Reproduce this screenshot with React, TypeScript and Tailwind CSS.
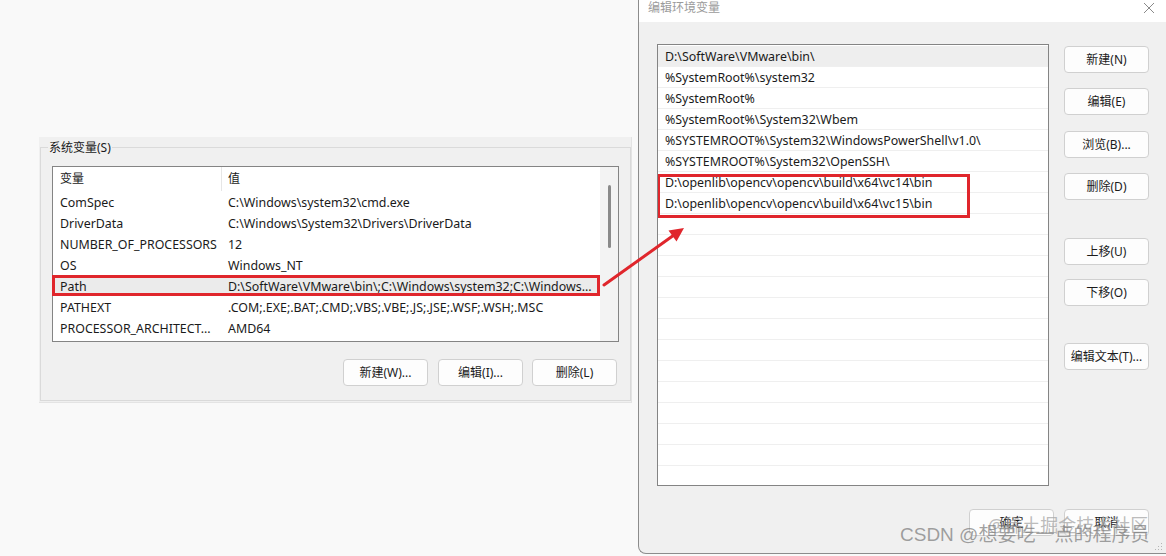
import React from "react";

const leftRows: [string, string][] = [
  ["ComSpec", "C:\\Windows\\system32\\cmd.exe"],
  ["DriverData", "C:\\Windows\\System32\\Drivers\\DriverData"],
  ["NUMBER_OF_PROCESSORS", "12"],
  ["OS", "Windows_NT"],
  ["Path", "D:\\SoftWare\\VMware\\bin\\;C:\\Windows\\system32;C:\\Windows..."],
  ["PATHEXT", ".COM;.EXE;.BAT;.CMD;.VBS;.VBE;.JS;.JSE;.WSF;.WSH;.MSC"],
  ["PROCESSOR_ARCHITECT...", "AMD64"],
];

const rightRows: string[] = [
  "D:\\SoftWare\\VMware\\bin\\",
  "%SystemRoot%\\system32",
  "%SystemRoot%",
  "%SystemRoot%\\System32\\Wbem",
  "%SYSTEMROOT%\\System32\\WindowsPowerShell\\v1.0\\",
  "%SYSTEMROOT%\\System32\\OpenSSH\\",
];

const highlighted: string[] = [
  "D:\\openlib\\opencv\\opencv\\build\\x64\\vc14\\bin",
  "D:\\openlib\\opencv\\opencv\\build\\x64\\vc15\\bin",
];

function Btn({ children, className = "" }: { children: React.ReactNode; className?: string }) {
  return (
    <div
      className={
        "flex h-[27px] w-[85px] shrink-0 items-center justify-center rounded-[4px] border border-[#d0d0d0] bg-[#fdfdfd] text-[12px] leading-[16px] text-[#1b1b1b] " +
        className
      }
    >
      {children}
    </div>
  );
}

function RRow({ text, selected = false }: { text?: string; selected?: boolean }) {
  return (
    <div
      className={
        "flex h-[21px] shrink-0 items-center border-b border-[#efefef] pl-[7px] pt-[1px] text-[12.4px] leading-[17px] whitespace-nowrap " +
        (selected ? "bg-[#eeeeee]" : "")
      }
    >
      {text ?? ""}
    </div>
  );
}

export default function App() {
  const empties = Array.from({ length: 14 });
  return (
    <div className="relative flex h-[556px] w-[1166px] overflow-hidden bg-[#f9f9f9] font-['Noto_Sans','Noto_Sans_CJK_SC',sans-serif] text-[12px] leading-none text-[#1a1a1a]">
      {/* Left: system variables panel */}
      <div className="w-[638px] shrink-0 pl-[39px] pt-[137px]">
        <div className="h-[266px] w-[593px] border-b border-r border-[#e4e4e4] bg-[#f0f0f0] pl-[1px] pt-[10px]">
          <div className="relative h-[254px] w-[591px] border border-[#dadada] px-[11px] pt-[18px]">
            <span className="absolute -top-[7px] left-[7px] bg-[#f0f0f0] px-[1px] leading-[14px]">系统变量(S)</span>

            <div className="flex h-[176px] w-[567px] border border-[#848484] bg-white">
              <div className="min-w-0 flex-1">
                <div className="flex h-[24px] items-center leading-[16px]">
                  <div className="flex h-full w-[169px] items-center border-r border-[#e6e6e6] pl-[7px]">变量</div>
                  <div className="pl-[6px]">值</div>
                </div>
                {leftRows.map(([n, v]) => (
                  <div
                    key={n}
                    className={
                      "relative flex h-[21px] items-center pt-[1px] text-[12.4px] leading-[17px] whitespace-nowrap " +
                      (n === "Path" ? "bg-[#ebebeb]" : "")
                    }
                  >
                    <div className="w-[168px] shrink-0 overflow-hidden pl-[7px]">{n}</div>
                    <div className="min-w-0 flex-1 overflow-hidden pl-[7px]">{v}</div>
                    {n === "Path" && (
                      <div className="absolute -left-[1px] top-0 right-0 bottom-0 border-[3px] border-[#e0262c]" />
                    )}
                  </div>
                ))}
              </div>
              <div className="flex w-[18px] shrink-0 justify-center bg-[#f3f3f3] pt-[18px]">
                <div className="h-[63px] w-[3px] rounded-full bg-[#8a8a8a]" />
              </div>
            </div>

            <div className="mt-[17px] flex w-[567px] justify-end pr-[2px]">
              <Btn>新建(W)...</Btn>
              <Btn className="ml-[10px]">编辑(I)...</Btn>
              <Btn className="ml-[9px]">删除(L)</Btn>
            </div>
          </div>
        </div>
      </div>

      {/* Right: edit environment variable dialog */}
      <div className="relative flex h-[554px] w-[528px] shrink-0 flex-col overflow-hidden rounded-bl-[8px] border-b border-l border-[#8c8c8c] bg-[#f0f0f0]">
        <div className="flex h-[22px] shrink-0 items-start justify-between bg-white pl-[9px] pr-[11px] pt-[1px]">
          <span className="leading-[14px] text-[#9b9b9b]">编辑环境变量</span>
          <svg width="12" height="12" viewBox="0 0 12 12" className="mt-[1px]">
            <path d="M1 1 L11 11 M11 1 L1 11" stroke="#8a8a8a" strokeWidth="1" fill="none" />
          </svg>
        </div>

        <div className="flex flex-1 flex-col pl-[18px] pr-[17px] pt-[22px]">
          <div className="flex">
            <div className="flex h-[442px] w-[392px] shrink-0 flex-col overflow-hidden border border-[#848484] bg-white pt-[1px]">
              <RRow text={rightRows[0]} selected />
              {rightRows.slice(1).map((t) => (
                <RRow key={t} text={t} />
              ))}
              <div className="relative flex shrink-0 flex-col">
                {highlighted.map((t) => (
                  <RRow key={t} text={t} />
                ))}
                <div className="absolute -left-[1px] top-[2px] h-[44px] w-[313px] border-[3px] border-[#e0262c]" />
              </div>
              {empties.map((_, i) => (
                <RRow key={i} />
              ))}
            </div>

            <div className="ml-[15px] flex flex-col">
              <Btn className="mt-[2px]">新建(N)</Btn>
              <Btn className="mt-[15px]">编辑(E)</Btn>
              <Btn className="mt-[16px]">浏览(B)...</Btn>
              <Btn className="mt-[15px]">删除(D)</Btn>
              <Btn className="mt-[38px]">上移(U)</Btn>
              <Btn className="mt-[14px]">下移(O)</Btn>
              <Btn className="mt-[37px]">编辑文本(T)...</Btn>
            </div>
          </div>

          <div className="mt-[23px] flex justify-end gap-[10px]">
            <Btn>确定</Btn>
            <Btn>取消</Btn>
          </div>
        </div>

        {/* resize grip */}
        <svg width="8" height="8" viewBox="0 0 8 8" className="absolute bottom-[2px] right-[3px]">
          <rect x="6" y="0" width="1" height="1" fill="#b5b5b5" />
          <rect x="3" y="3" width="1" height="1" fill="#b5b5b5" />
          <rect x="6" y="3" width="1" height="1" fill="#b5b5b5" />
          <rect x="0" y="6" width="1" height="1" fill="#b5b5b5" />
          <rect x="3" y="6" width="1" height="1" fill="#b5b5b5" />
          <rect x="6" y="6" width="1" height="1" fill="#b5b5b5" />
        </svg>
      </div>

      {/* annotation arrow */}
      <svg className="pointer-events-none absolute left-0 top-0" width="1166" height="556" viewBox="0 0 1166 556">
        <line x1="604" y1="285" x2="674" y2="235" stroke="#e0262c" strokeWidth="3" strokeLinecap="round" />
        <polygon points="684,228 676.5,241.5 668.5,230.5" fill="#e0262c" />
      </svg>

      {/* watermarks */}
      <div className="pointer-events-none absolute left-[988px] top-[514px] whitespace-nowrap text-[18px] leading-[22px] text-[rgba(170,170,170,0.8)]">
        @稀土掘金技术社区
      </div>
      <div className="pointer-events-none absolute left-[900px] top-[524px] whitespace-nowrap font-['Liberation_Sans','Noto_Sans_CJK_SC',sans-serif] text-[19px] leading-[22px] text-[rgba(120,120,120,0.7)]">
        CSDN @想要吃一点的程序员
      </div>
    </div>
  );
}
